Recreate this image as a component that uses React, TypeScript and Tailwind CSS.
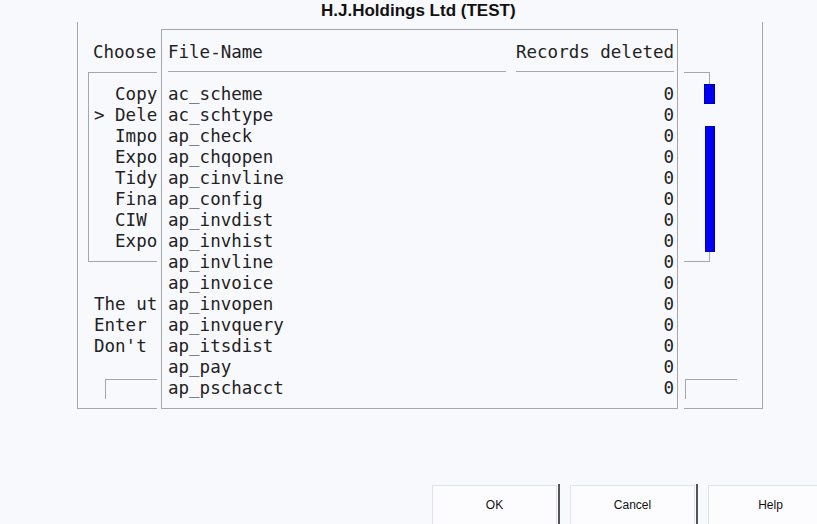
import React from 'react';

const menuItems = ['  Copy', '> Dele', '  Impo', '  Expo', '  Tidy', '  Fina', '  CIW', '  Expo'];
const infoLines = ['The ut', 'Enter', "Don't"];
const files = [
  'ac_scheme', 'ac_schtype', 'ap_check', 'ap_chqopen', 'ap_cinvline', 'ap_config', 'ap_invdist',
  'ap_invhist', 'ap_invline', 'ap_invoice', 'ap_invopen', 'ap_invquery', 'ap_itsdist', 'ap_pay', 'ap_pschacct',
];

const mono = "font-['DejaVu_Sans_Mono',monospace] text-[17.5px] leading-[21px] text-[#222] whitespace-pre";

function Button({ label }: { label: string }) {
  return (
    <div className="flex shrink-0">
      <div className="w-[125px] h-[40px] border border-[#e2e3ea] bg-[#fcfcff] flex items-center justify-center text-[12px] text-[#111] font-['Liberation_Sans',sans-serif]">
        {label}
      </div>
      <div className="w-[2px] h-[40px] bg-[#555] ml-[1px] -mt-[1px]" />
    </div>
  );
}

export default function App() {
  return (
    <div className="relative w-[817px] h-[524px] overflow-hidden bg-[#f8f9fd]">
      <div className="h-[22px] pl-[321px] flex items-center text-[17px] font-bold text-[#111] font-['Liberation_Sans',sans-serif]">
        H.J.Holdings Ltd (TEST)
      </div>

      {/* background form */}
      <div className="ml-[77px] w-[686px] h-[387px] border-l border-r border-b border-[#a6a7ae] pt-[20px]">
        <div className={`${mono} pl-[15px]`}>Choose</div>
        <div className="ml-[10px] mt-[9px] w-[622px] border border-[#a6a7ae] pt-[11px] pb-[9px] pl-[5px]">
          {menuItems.map((m, i) => (
            <div key={i} className={mono}>{m}</div>
          ))}
        </div>
        <div className="mt-[32px] pl-[16px]">
          {infoLines.map((l) => (
            <div key={l} className={mono}>{l}</div>
          ))}
        </div>
        <div className="mt-[22px] flex">
          <div className="ml-[27px] w-[200px] h-[20px] border-t border-l border-[#a6a7ae]" />
          <div className="ml-[380px] w-[52px] h-[20px] border-t border-l border-[#a6a7ae]" />
        </div>
      </div>

      {/* scrollbar */}
      <div className="absolute left-[702px] top-[84px] w-[14px] h-[168px] bg-[#f8f9fd]">
        <div className="ml-[2px] w-[11px] h-[20px] bg-[#0000f4] border border-[#0000b0]" />
        <div className="ml-[3px] mt-[22px] w-[10px] h-[126px] bg-[#0000f4] border border-[#0000b0]" />
      </div>

      {/* popup list */}
      <div className="absolute left-[157px] top-[25px] w-[527px] h-[384px] bg-[#f8f9fd] pl-[4px] pr-[6px] pt-[4px]">
        <div className="h-full border border-[#a6a7ae] pl-[6px] pr-[3px] pt-[12px]">
          <div className="flex gap-[10px]">
            <div className={`${mono} w-[338px] pb-[8px] border-b border-[#a6a7ae]`}>File-Name</div>
            <div className={`${mono} w-[158px] pb-[8px] border-b border-[#a6a7ae] text-right`}>Records deleted</div>
          </div>
          <div className="mt-[12px]">
            {files.map((f) => (
              <div key={f} className="flex gap-[10px]">
                <div className={`${mono} w-[338px]`}>{f}</div>
                <div className={`${mono} w-[158px] text-right`}>0</div>
              </div>
            ))}
          </div>
        </div>
      </div>

      <div className="mt-[76px] ml-[432px] flex gap-[10px]">
        <Button label="OK" />
        <Button label="Cancel" />
        <Button label="Help" />
      </div>
    </div>
  );
}
